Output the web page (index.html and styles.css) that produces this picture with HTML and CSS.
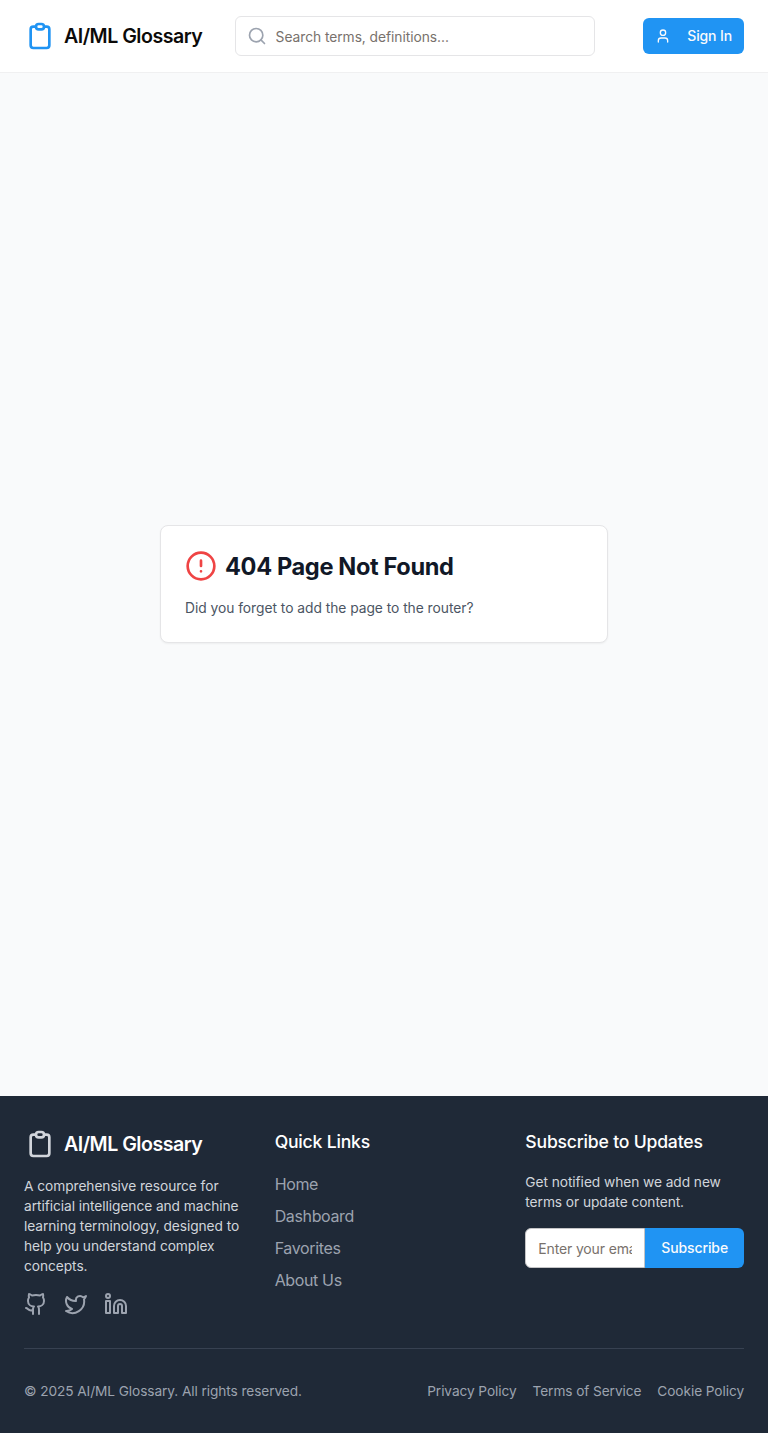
FILE: index.html
```html
<!DOCTYPE html>
<html lang="en">
<head>
<meta charset="utf-8">
<title>AI/ML Glossary</title>
<link rel="stylesheet" href="styles.css">
</head>
<body>
<header class="header">
  <a class="brand">
    <svg class="icon brand-icon" viewBox="0 0 24 24"><path d="M9 5H7a2 2 0 0 0-2 2v12a2 2 0 0 0 2 2h10a2 2 0 0 0 2-2V7a2 2 0 0 0-2-2h-2M9 5a2 2 0 0 0 2 2h2a2 2 0 0 0 2-2M9 5a2 2 0 0 1 2-2h2a2 2 0 0 1 2 2"/></svg>
    <span>AI/ML Glossary</span>
  </a>
  <label class="search">
    <svg class="icon search-icon" viewBox="0 0 24 24"><circle cx="11" cy="11" r="8"/><path d="m21 21-4.3-4.3"/></svg>
    <input class="search-input" type="text" placeholder="Search terms, definitions...">
  </label>
  <button class="button sign-in">
    <svg class="icon user-icon" viewBox="0 0 24 24"><path d="M19 21v-2a4 4 0 0 0-4-4H9a4 4 0 0 0-4 4v2"/><circle cx="12" cy="7" r="4"/></svg>
    <span>Sign In</span>
  </button>
</header>
<main class="main">
  <section class="card">
    <div class="card-head">
      <svg class="icon alert-icon" viewBox="0 0 24 24"><circle cx="12" cy="12" r="10"/><path d="M12 8v4M12 16h.01"/></svg>
      <h1 class="card-title">404 Page Not Found</h1>
    </div>
    <p class="card-text">Did you forget to add the page to the router?</p>
  </section>
</main>
<footer class="footer">
  <div class="columns">
    <div class="column">
      <div class="brand brand-light">
        <svg class="icon brand-icon" viewBox="0 0 24 24"><path d="M9 5H7a2 2 0 0 0-2 2v12a2 2 0 0 0 2 2h10a2 2 0 0 0 2-2V7a2 2 0 0 0-2-2h-2M9 5a2 2 0 0 0 2 2h2a2 2 0 0 0 2-2M9 5a2 2 0 0 1 2-2h2a2 2 0 0 1 2 2"/></svg>
        <span>AI/ML Glossary</span>
      </div>
      <p class="footer-text">A comprehensive resource for artificial intelligence and machine learning terminology, designed to help you understand complex concepts.</p>
      <div class="social">
        <svg class="icon social-icon" viewBox="0 0 24 24"><path d="M15 22v-4a4.8 4.8 0 0 0-1-3.5c3 0 6-2 6-5.5.08-1.25-.27-2.48-1-3.5.28-1.15.28-2.35 0-3.5 0 0-1 0-3 1.5-2.64-.5-5.36-.5-8 0C6 2 5 2 5 2c-.3 1.15-.3 2.35 0 3.5A5.403 5.403 0 0 0 4 9c0 3.5 3 5.5 6 5.5-.39.49-.68 1.05-.85 1.65-.17.6-.22 1.23-.15 1.85v4"/><path d="M9 18c-4.51 2-5-2-7-2"/></svg>
        <svg class="icon social-icon" viewBox="0 0 24 24"><path d="M22 4s-.7 2.1-2 3.4c1.6 10-9.4 17.3-18 11.6 2.2.1 4.4-.6 6-2C3 15.5.5 9.6 3 5c2.2 2.6 5.6 4.1 9 4-.9-4.2 4-6.6 7-3.8 1.1 0 3-1.2 3-1.2z"/></svg>
        <svg class="icon social-icon" viewBox="0 0 24 24"><path d="M16 8a6 6 0 0 1 6 6v7h-4v-7a2 2 0 0 0-4 0v7h-4v-7a6 6 0 0 1 6-6z"/><path d="M2 9h4v12H2z"/><circle cx="4" cy="4" r="2"/></svg>
      </div>
    </div>
    <div class="column">
      <h2 class="footer-title">Quick Links</h2>
      <nav class="links"><a>Home</a><a>Dashboard</a><a>Favorites</a><a>About Us</a></nav>
    </div>
    <div class="column">
      <h2 class="footer-title">Subscribe to Updates</h2>
      <p class="footer-text">Get notified when we add new terms or update content.</p>
      <form class="subscribe">
        <input class="email" type="email" placeholder="Enter your email">
        <button class="button subscribe-button" type="button">Subscribe</button>
      </form>
    </div>
  </div>
  <div class="legal">
    <span>© 2025 AI/ML Glossary. All rights reserved.</span>
    <nav class="legal-links"><a>Privacy Policy</a><a>Terms of Service</a><a>Cookie Policy</a></nav>
  </div>
</footer>
</body>
</html>
```
FILE: styles.css
```css
* { box-sizing: border-box; }
body {
  margin: 0;
  background: #f9fafb;
  color: #0c0a09;
  font: 400 16px/24px Inter, sans-serif;
}
h1, h2, p { margin: 0; }
input, button { font-family: inherit; }
.icon {
  display: block;
  flex: none;
  fill: none;
  stroke: currentColor;
  stroke-width: 2;
  stroke-linecap: round;
  stroke-linejoin: round;
}
.header {
  display: flex;
  align-items: center;
  height: 73px;
  padding: 0 24px;
  background: #fff;
  border-bottom: 1px solid #f0f0f1;
}
.brand {
  display: flex;
  align-items: center;
  gap: 8px;
  font-size: 19.6px;
  line-height: 28px;
  font-weight: 600;
  letter-spacing: -.5px;
  white-space: nowrap;
}
.header .brand { width: 178.6px; margin-right: 32px; }
.brand-icon { width: 32px; height: 32px; color: #2094f3; }
.brand-light { color: #fff; margin-bottom: 16px; }
.brand-light .brand-icon { color: #d1d5db; }
.search {
  display: flex;
  align-items: center;
  width: 360px;
  height: 40px;
  padding: 0 11px;
  gap: 9px;
  border: 1px solid #e5e5e7;
  border-radius: 6px;
}
.search-icon { width: 20px; height: 20px; color: #9ca3af; }
.search-input {
  flex: 1;
  min-width: 0;
  padding: 2px 0 0;
  border: 0;
  background: none;
  font-size: 13.8px;
  line-height: 20px;
  letter-spacing: -.05px;
}
input::placeholder { color: #78716c; }
.button {
  border: 0;
  background: #2094f3;
  color: #f8fafc;
  font-size: 14px;
  line-height: 20px;
  font-weight: 500;
  letter-spacing: -.12px;
  white-space: nowrap;
}
.sign-in {
  display: flex;
  align-items: center;
  gap: 16px;
  height: 36px;
  margin-left: auto;
  padding: 0 12px;
  border-radius: 6px;
}
.user-icon { width: 16px; height: 16px; }
.main {
  display: flex;
  align-items: center;
  justify-content: center;
  height: 1023px;
  padding-bottom: 1px;
}
.card {
  width: 448px;
  padding: 24px;
  background: #fff;
  border: 1px solid #e5e5e7;
  border-radius: 8px;
  box-shadow: 0 1px 2px rgba(0, 0, 0, .05);
}
.card-head { display: flex; align-items: center; gap: 8px; }
.alert-icon { width: 32px; height: 32px; color: #ef4444; }
.card-title {
  padding-top: 2px;
  color: #111827;
  font-size: 23.6px;
  line-height: 30px;
  font-weight: 700;
  letter-spacing: -.37px;
}
.card-text { margin-top: 16px; color: #4b5563; font-size: 13.8px; line-height: 20px; letter-spacing: -.03px; }
.footer { padding: 32px 24px; background: #1f2937; }
.columns { display: grid; grid-template-columns: repeat(3, minmax(0, 1fr)); gap: 32px; }
.footer-text { margin-bottom: 16px; color: #d1d5db; font-size: 13.75px; line-height: 20px; letter-spacing: -.07px; }
.social { display: flex; gap: 16px; color: #9ca3af; }
.social-icon { width: 24px; height: 24px; }
.footer-title {
  margin-bottom: 16px;
  color: #fff;
  font-size: 17.6px;
  line-height: 28px;
  font-weight: 500;
  letter-spacing: -.2px;
}
.links { display: flex; flex-direction: column; gap: 8px; color: #9ca3af; letter-spacing: -.36px; }
.subscribe { display: flex; }
.email {
  flex: 1;
  min-width: 0;
  height: 40px;
  padding: 8px 12px;
  background: #fff;
  border: 1px solid #c4c4c6;
  border-radius: 6px 0 0 6px;
  font-size: 14px;
  line-height: 20px;
  letter-spacing: -.15px;
}
.subscribe-button { height: 40px; padding: 0 16px; border-radius: 0 6px 6px 0; }
.legal {
  display: flex;
  justify-content: space-between;
  margin-top: 32px;
  padding-top: 32px;
  border-top: 1px solid #374151;
  color: #9ca3af;
  font-size: 13.7px;
  line-height: 20px;
  letter-spacing: -.09px;
}
.legal-links { display: flex; gap: 16px; }
```
